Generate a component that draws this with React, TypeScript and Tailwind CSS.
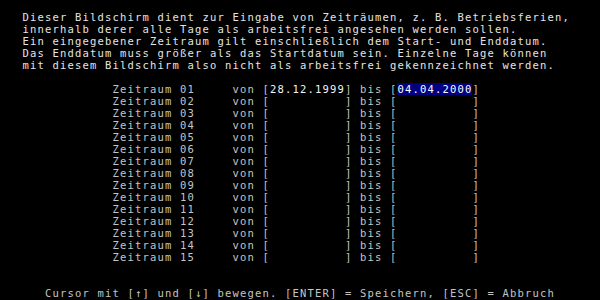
import React from "react";

const header = [
  "   Dieser Bildschirm dient zur Eingabe von Zeiträumen, z. B. Betriebsferien,",
  "   innerhalb derer alle Tage als arbeitsfrei angesehen werden sollen.",
  "   Ein eingegebener Zeitraum gilt einschließlich dem Start- und Enddatum.",
  "   Das Enddatum muss größer als das Startdatum sein. Einzelne Tage können",
  "   mit diesem Bildschirm also nicht als arbeitsfrei gekennzeichnet werden.",
];

const Line = ({ children, className = "" }: { children?: React.ReactNode; className?: string }) => (
  <div className={`h-[12px] leading-[12px] whitespace-pre ${className}`}>{children ?? " "}</div>
);

export default function App() {
  const rows = Array.from({ length: 15 }, (_, i) => String(i + 1).padStart(2, "0"));
  return (
    <div
      className="w-[600px] h-[300px] bg-black overflow-hidden pt-[11px] text-[10.5px] tracking-[1.178px] text-[#c4c4c4]"
      style={{ fontFamily: '"DejaVu Sans Mono", "Liberation Mono", monospace' }}
    >
      {header.map((h, i) => (
        <Line key={i} className="text-[#e4e4e4]">{h}</Line>
      ))}
      <Line />
      {rows.map((n, i) => (
        <Line key={n}>
          {"               Zeitraum " + n + "     von ["}
          {i === 0 ? <span className="text-[#f4f4f4]">28.12.1999</span> : "          "}
          {"] bis ["}
          {i === 0 ? (
            <span className="inline-block h-[12px] bg-[#000080] text-white">04.04.2000</span>
          ) : (
            "          "
          )}
          {"]"}
        </Line>
      ))}
      <Line />
      <Line />
      <Line>{"      Cursor mit [↑] und [↓] bewegen. [ENTER] = Speichern, [ESC] = Abbruch"}</Line>
    </div>
  );
}
